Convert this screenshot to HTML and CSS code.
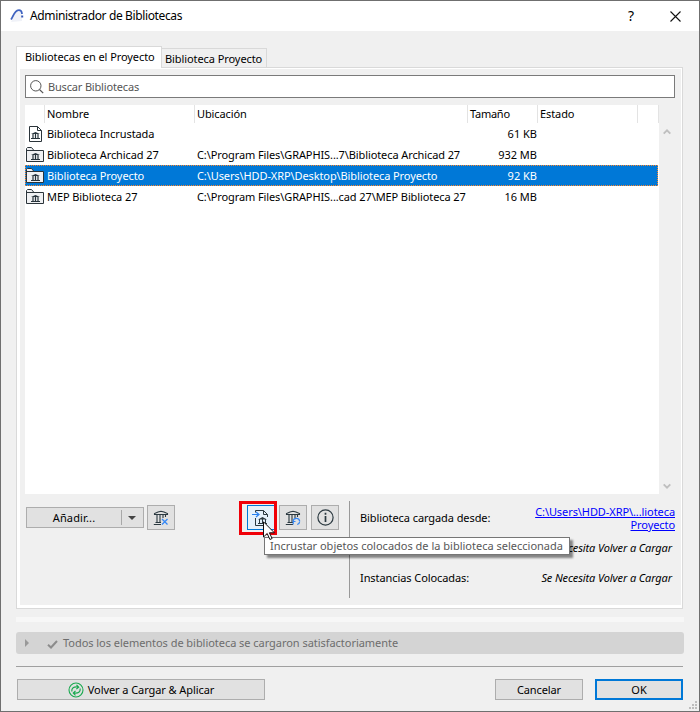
FILE: index.html
```html
<!DOCTYPE html>
<html lang="es">
<head>
<meta charset="utf-8">
<title>Administrador de Bibliotecas</title>
<link rel="stylesheet" href="styles.css">
</head>
<body>
<svg class="defs" width="0" height="0" aria-hidden="true">
  <symbol id="folder" viewBox="0 0 18 16">
    <path d="M.5 14.500V1.500L1.500.5H5.500L8 3.500H17.500V14.500Z" fill="#f0f1f3" stroke="#2b343a"/>
    <path d="M.5 3.500H8" fill="none" stroke="#2b343a"/>
    <path d="M5 8 9.500 6 14 8Z" fill="#26323a"/>
    <path d="M7 8v4M9.500 8v4M12 8v4" fill="none" stroke="#26323a" stroke-width="1.200"/>
    <path d="M5 12.500h9" fill="none" stroke="#26323a"/>
  </symbol>
  <symbol id="file" viewBox="0 0 13 16">
    <path d="M.5.5H8.500L12.500 4.500V15.500H.5ZM8.500.5V4.500H12.500" fill="#fff" stroke="#2b343a"/>
    <path d="M2 8 6.500 6 11 8Z" fill="#26323a"/>
    <path d="M4 8v4M6.500 8v4M9 8v4" fill="none" stroke="#26323a" stroke-width="1.200"/>
    <path d="M2 12.500h9" fill="none" stroke="#26323a"/>
  </symbol>
  <symbol id="temple" viewBox="0 0 16 16">
    <path d="M1.500 4.500V3.500L5 2 8 1.200 11 2l3.500 1.500v1ZM4 5v7.500M7 5v7.500M10 5v3M12.500 5v2M2.500 12.500h5.500M.8 14.500H8" fill="none" stroke="#2b3940" stroke-width="1.100"/>
  </symbol>
</svg>
<div class="window">
  <header class="titlebar">
    <svg class="logo" width="14" height="14" viewBox="0 0 14 14"><path d="M1 13 5 5 8 1h4v11Z" fill="#f0f2f8"/><path d="M1 10.500C3 8 4.500 1.500 8.500 1.200 10.500 1 11.800 2 12 5" fill="none" stroke="#3f63c0" stroke-width="1.800"/><path d="M11.200 6.500h2v2h-2z" fill="#3456b4"/></svg>
    <h1 class="title">Administrador de Bibliotecas</h1>
    <span class="help">?</span>
    <svg class="close" width="11" height="11" viewBox="0 0 11 11"><path d="M.5.5l10 10M10.500.5l-10 10" stroke="#111" stroke-width="1.100"/></svg>
  </header>

  <nav class="tabs">
    <div class="tab active">Bibliotecas en el Proyecto</div>
    <div class="tab second">Biblioteca Proyecto</div>
  </nav>

  <main class="pane">
    <div class="search">
      <svg width="14" height="14" viewBox="0 0 14 14"><circle cx="5.800" cy="5.800" r="5.200" fill="none" stroke="#555"/><path d="M9.500 9.500l3.700 3.700" stroke="#555" stroke-width="1.200"/></svg>
      <span class="placeholder">Buscar Bibliotecas</span>
    </div>

    <div class="list">
      <div class="table">
        <div class="row head">
          <span class="cell"></span><span class="cell">Nombre</span><span class="cell">Ubicación</span><span class="cell tam">Tamaño</span><span class="cell">Estado</span><span class="cell"></span>
        </div>
        <div class="row">
          <span class="ic"><svg class="file" width="13" height="16"><use href="#file"/></svg></span><span class="cell name">Biblioteca Incrustada</span><span class="cell"></span><span class="size">61 KB</span>
        </div>
        <div class="row">
          <span class="ic"><svg width="18" height="16"><use href="#folder"/></svg></span><span class="cell name">Biblioteca Archicad 27</span><span class="cell path">C:\Program Files\GRAPHIS...7\Biblioteca Archicad 27</span><span class="size">932 MB</span>
        </div>
        <div class="row selected">
          <span class="ic"><svg width="18" height="16"><use href="#folder"/></svg></span><span class="cell name">Biblioteca Proyecto</span><span class="cell path">C:\Users\HDD-XRP\Desktop\Biblioteca Proyecto</span><span class="size">92 KB</span>
        </div>
        <div class="row">
          <span class="ic"><svg width="18" height="16"><use href="#folder"/></svg></span><span class="cell name">MEP Biblioteca 27</span><span class="cell path">C:\Program Files\GRAPHIS...cad 27\MEP Biblioteca 27</span><span class="size">16 MB</span>
        </div>
      </div>
      <div class="scroll">
        <svg width="8" height="6" viewBox="0 0 8 6"><path d="M.7 4.700 4 1.400l3.300 3.300" fill="none" stroke="#bfbfbf" stroke-width="1.900"/></svg>
        <svg width="8" height="6" viewBox="0 0 8 6"><path d="M.7 1.300 4 4.600l3.300-3.300" fill="none" stroke="#bfbfbf" stroke-width="1.900"/></svg>
      </div>
    </div>

    <div class="lower">
      <div class="tools">
        <div class="button add"><span class="addtext">Añadir...</span><span class="arrow"><svg width="8" height="4"><path d="M0 0h8L4 4Z" fill="#444"/></svg></span></div>
        <div class="button square"><svg width="16" height="16" viewBox="0 0 16 16"><use href="#temple"/><path d="M9 9l5.500 5.500M14.500 9 9 14.500" stroke="#3487f5" stroke-width="1.300"/></svg></div>
        <div class="button square embed">
          <svg width="18" height="18" viewBox="0 0 18 18"><path d="M3.500 3.500V1.500H11.500L15.500 5.500V8M11.500 1.500V5.500H15.500M3.500 9v7.500h3" fill="none" stroke="#2b3940"/><path d="M0 5.500h6M4 3l3 2.500L4 8" fill="none" stroke="#2680f0" stroke-width="1.200"/><path d="M6 10.500 10.500 8 15 10.500Z" fill="#2b3940"/><path d="M7.500 10v4M10.500 10v4M13.500 10v4M6 14.500h9M5 16.500h10" fill="none" stroke="#2b3940"/></svg>
          <span class="highlight"></span>
          <svg class="cursor" width="12" height="20" viewBox="0 0 12 20"><path d="M.5.8V16l3.700-3.500 2.700 6 2.200-1-2.700-5.700h5Z" fill="#fff" stroke="#111"/></svg>
        </div>
        <div class="button square"><svg width="16" height="16" viewBox="0 0 16 16"><use href="#temple"/><path d="M8 11.500a3.400 3.400 0 0 1 6.700-.5M14.700 11.500a3.300 3.300 0 0 1-2.500 3M8.200 14.500v-3h2.300" fill="none" stroke="#3487f5" stroke-width="1.200"/></svg></div>
        <div class="button square"><svg width="17" height="17" viewBox="0 0 17 17"><circle cx="8.500" cy="8.500" r="7.600" fill="none" stroke="#2b3940" stroke-width="1.200"/><path d="M8.500 3.800v2M8.500 7v6" stroke="#2b3940" stroke-width="1.700"/></svg></div>
      </div>
      <div class="info">
        <div class="inforow"><span>Biblioteca cargada desde:</span><span class="link"><u>C:\Users\HDD-XRP\...lioteca</u><br><u>Proyecto</u></span></div>
        <div class="inforow"><span></span><em>Se Necesita Volver a Cargar</em></div>
        <div class="inforow"><span>Instancias Colocadas:</span><em>Se Necesita Volver a Cargar</em></div>
      </div>
      <div class="tooltip"><span>Incrustar objetos colocados de la biblioteca seleccionada</span></div>
    </div>
  </main>

  <div class="strip"></div>
  <div class="status">
    <svg class="tri" width="4" height="8"><path d="M0 0l4 4-4 4Z" fill="#999"/></svg>
    <svg class="check" width="11" height="9" viewBox="0 0 11 9"><path d="M1 4.800 4 7.500 10 1" fill="none" stroke="#8c8c8c" stroke-width="2"/></svg>
    <span class="statustext">Todos los elementos de biblioteca se cargaron satisfactoriamente</span>
  </div>
  <footer class="footer">
    <div class="button reload"><svg width="16" height="16" viewBox="0 0 16 16"><circle cx="8" cy="8" r="7" fill="none" stroke="#19a94f" stroke-width="1.100"/><path d="M3.800 9.500C3.500 6 5.500 4.500 10 5M8.500 2.800l2.200 2.300-2.400 2M12.200 6.500c.3 3.500-1.700 5-6.200 4.500M7.500 8.900l-2.200 2.200 2.200 2.200" fill="none" stroke="#19a94f" stroke-width="1.200"/></svg><span>Volver a Cargar &amp; Aplicar</span></div>
    <div class="button cancel"><span>Cancelar</span></div>
    <div class="button ok"><span>OK</span></div>
  </footer>
  <svg class="grip" width="8" height="8"><path d="M6 0h2v2H6zM3 3h2v2H3zM6 3h2v2H6zM0 6h2v2H0zM3 6h2v2H3zM6 6h2v2H6z" fill="#bdbdbd"/></svg>
</div>
</body>
</html>
```

FILE: styles.css
```css
* { box-sizing: border-box; }
body { margin: 0; font: 11px/16px "Noto Sans", "Open Sans", sans-serif; color: #000; }
svg { display: block; flex: none; }
.defs { position: absolute; }
.window { position: relative; width: 700px; height: 712px; border: 1px solid #6f6f6f; background: #f0f0f0; overflow: hidden; white-space: nowrap; }
.titlebar { height: 30px; background: #fff; display: flex; align-items: center; padding-left: 9px; }
.title { margin: 0 0 0 6px; font-size: 12px; letter-spacing: -.37px; font-weight: 400; flex: 1; }
.help { width: 10px; text-align: center; font-size: 14px; margin-right: -1px; }
.close { margin: 0 18px 0 35px; }
.tabs { display: flex; align-items: flex-end; height: 36px; margin-left: 15px; padding-top: 15px; letter-spacing: -.08px; }
.tab { border: 1px solid #d9d9d9; border-bottom: 0; }
.active { position: relative; z-index: 1; width: 146px; height: 22px; margin-bottom: -1px; background: #fff; padding: 2px 0 0 8px; }
.second { width: 106px; height: 19px; margin-left: -1px; padding: 2px 0 0 3px; }
.pane { width: 667px; height: 542px; margin-left: 15px; border: 1px solid #d9d9d9; background: #f0f0f0; box-shadow: inset 3px 1px #fff, inset -1px -3px #fff; padding: 7px 6px 0 8px; }
.search { display: flex; align-items: center; width: 650px; height: 23px; border: 1px solid #7a7a7a; background: #fff; padding-left: 4px; color: #555; letter-spacing: -.17px; }
.placeholder { margin-left: 4px; }
.list { display: flex; height: 389px; margin-top: 7px; }
.table { width: 634px; background: #fff; }
.row { display: grid; grid-template-columns: 20px 150px 273px 70px 100px 21px; height: 21px; align-items: center; }
.row.head { height: 18px; align-items: stretch; }
.head .cell { border-right: 1px solid #e3e3e3; padding-top: 1px; letter-spacing: -.1px; }
.head .tam { letter-spacing: -.25px; }
.cell { padding-left: 2px; }
.name { letter-spacing: -.08px; }
.path { letter-spacing: -.1px; }
.size { text-align: right; padding-right: 1px; }
.ic { padding-left: 1px; }
.file { margin-left: 3px; }
.selected { background: #0078d7; color: #fff; outline: 1px dotted #ff872b; outline-offset: -1px; width: 633px; }
.scroll { flex: 1; display: flex; flex-direction: column; align-items: center; justify-content: space-between; padding: 24px 1px 5px 0; }
.lower { position: relative; display: flex; padding-top: 7px; }
.tools { width: 324px; display: flex; align-items: flex-start; padding: 4px 0 0 1px; gap: 4px; }
.button { display: flex; align-items: center; justify-content: center; border: 1px solid #adadad; background: #e1e1e1; }
.add { width: 118px; height: 21px; margin: 2px -1px 0 0; }
.addtext { flex: 1; text-align: center; letter-spacing: .15px; }
.arrow { width: 22px; height: 15px; border-left: 1px solid #a8a8a8; display: flex; align-items: center; padding-left: 6px; }
.square { width: 28px; height: 25px; }
.embed { position: relative; margin-left: 68px; background: #e5f1fb; border-color: #0078d7; }
.highlight { position: absolute; left: -9px; top: -5px; width: 38px; height: 34px; border: 3px solid #f00008; }
.cursor { position: absolute; left: 15px; top: 15px; z-index: 2; }
.info { width: 327px; height: 97px; border-left: 1px solid #999; padding: 2px 1px 0 10px; letter-spacing: -.08px; }
.inforow { height: 30px; display: flex; justify-content: space-between; align-items: center; }
.inforow em { margin-right: 3px; letter-spacing: -.12px; }
.link { text-align: right; line-height: 13px; color: #00f; }
.tooltip { position: absolute; left: 239px; top: 43px; width: 306px; height: 18px; border: 1px solid #767676; background: #fff; color: #575757; padding-left: 5px; box-shadow: 3px 3px 2px rgba(0,0,0,.45); }
.strip { width: 668px; height: 5px; background: #f7f7f7; margin: 8px 0 10px 15px; }
.status { display: flex; align-items: center; width: 668px; height: 22px; margin-left: 15px; border-radius: 3px; background: #d4d4d4; color: #6d6d6d; padding-left: 9px; letter-spacing: -.04px; }
.check { margin: 2px 5px 0 18px; }
.footer { display: flex; width: 667px; margin: 12px 0 0 15px; border-top: 1px solid #a0a0a0; padding: 12px 0 0 1px; }
.reload { width: 248px; height: 21px; gap: 4px; letter-spacing: -.08px; }
.cancel { width: 88px; height: 21px; margin-left: auto; letter-spacing: -.1px; }
.ok { width: 88px; height: 21px; margin-left: 12px; border: 2px solid #0078d7; }
.grip { position: absolute; right: 2px; bottom: 2px; }
```
